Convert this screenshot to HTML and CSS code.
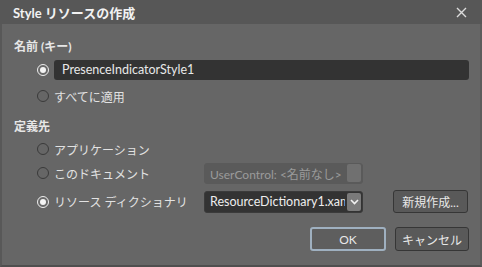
FILE: index.html
```html
<!DOCTYPE html>
<html lang="ja">
<head>
    <meta charset="UTF-8">
    <title>Style リソースの作成</title>
    <link rel="stylesheet" href="styles.css">
</head>
<body>
    <div class="dialog">
        <div class="titlebar">
            <span class="title">Style リソースの作成</span>
            <svg class="close" width="11" height="11" viewBox="0 0 11 11">
                <path d="M1 1 L10 10 M10 1 L1 10" stroke="#dcdcdc" stroke-width="1.4"/>
            </svg>
        </div>

        <div class="content">
            <div class="section-title">名前 (キー)</div>
            <div class="row row-name">
                <span class="radio checked"></span>
                <div class="textbox">PresenceIndicatorStyle1</div>
            </div>
            <div class="row row-all">
                <span class="radio"></span>
                <span class="label">すべてに適用</span>
            </div>

            <div class="section-title second">定義先</div>
            <div class="row row-app">
                <span class="radio"></span>
                <span class="label">アプリケーション</span>
            </div>
            <div class="row row-doc">
                <span class="radio"></span>
                <span class="label wide">このドキュメント</span>
                <div class="combo disabled">
                    <span class="combo-text">UserControl: &lt;名前なし&gt;</span>
                    <span class="combo-btn"></span>
                </div>
            </div>
            <div class="row row-dict">
                <span class="radio checked"></span>
                <span class="label wide">リソース ディクショナリ</span>
                <div class="combo">
                    <span class="combo-text">ResourceDictionary1.xaml</span>
                    <span class="combo-btn">
                        <svg width="9" height="6" viewBox="0 0 9 6">
                            <path d="M1 1 L4.5 4.5 L8 1" stroke="#f0f0f0" stroke-width="1.6" fill="none"/>
                        </svg>
                    </span>
                </div>
                <button class="btn new">新規作成...</button>
            </div>

            <div class="actions">
                <button class="btn ok">OK</button>
                <button class="btn">キャンセル</button>
            </div>
        </div>
    </div>
</body>
</html>
```

FILE: styles.css
```css
body {
    margin: 0;
    background-color: #4a4a4a;
    font-family: Lato, "Noto Sans CJK JP", sans-serif;
    font-size: 12px;
    color: #e6e6e6;
}
.dialog {
    width: 482px;
    height: 267px;
    box-sizing: border-box;
    background-color: #666666;
    border-left: 2px solid #585858;
    border-right: 2px solid #5c5c5c;
    border-bottom: 2px solid #4e4e4e;
    display: flex;
    flex-direction: column;
}
.titlebar {
    height: 24px;
    background-color: #575757;
    display: flex;
    align-items: center;
    justify-content: space-between;
    padding: 0 15px 0 13px;
    margin: 0 -2px;
}
.title {
    font-weight: bold;
    font-size: 13px;
    color: #f2f2f2;
}
.close {
    margin-top: 1px;
}
.content {
    flex: 1;
    padding: 0 11px 0 12px;
    display: flex;
    flex-direction: column;
}
.section-title {
    font-weight: bold;
    margin-top: 15px;
    height: 16px;
    line-height: 16px;
}
.section-title.second {
    margin-top: 13px;
}
.row {
    display: flex;
    align-items: center;
    padding-left: 23px;
}
.row-name {
    margin-top: 5px;
    height: 20px;
}
.row-all {
    margin-top: 6px;
    height: 20px;
}
.row-app {
    margin-top: 4px;
    height: 20px;
}
.row-doc {
    margin-top: 3px;
    height: 22px;
}
.row-dict {
    margin-top: 6px;
    height: 23px;
}
.radio {
    width: 12px;
    height: 12px;
    border: 1px solid #3a3a3a;
    border-radius: 50%;
    background-color: #666;
    box-sizing: border-box;
    flex-shrink: 0;
    margin-right: 5px;
    position: relative;
}
.radio.checked {
    border-color: #eeeeee;
    background-color: #6a6a6a;
}
.radio.checked::after {
    content: "";
    position: absolute;
    left: 2px;
    top: 2px;
    width: 6px;
    height: 6px;
    border-radius: 50%;
    background-color: #f5f5f5;
}
.label {
    color: #e2e2e2;
}
.label.wide {
    width: 150px;
}
.textbox {
    flex: 1;
    height: 20px;
    line-height: 20px;
    background-color: #333333;
    border-radius: 3px;
    padding-left: 8px;
    color: #e8e8e8;
    font-size: 12.5px;
}
.combo {
    width: 159px;
    height: 22px;
    box-sizing: border-box;
    border: 1px solid #3b3b3b;
    border-radius: 3px;
    background-color: #333333;
    display: flex;
    align-items: center;
    padding: 0 1px 0 5px;
}
.combo.disabled {
    background-color: #5a5a5a;
    border-color: #5a5a5a;
    width: 159px;
    height: 21px;
}
.combo-text {
    flex: 1;
    overflow: hidden;
    white-space: nowrap;
    color: #eeeeee;
    font-size: 12.5px;
}
.combo.disabled .combo-text {
    color: #9a9a9a;
    font-size: 12px;
}
.combo-btn {
    width: 14px;
    height: 18px;
    background-color: #7a7a7a;
    border-radius: 2px;
    display: flex;
    align-items: center;
    justify-content: center;
    margin-left: 2px;
}
.combo.disabled .combo-btn {
    background-color: #707070;
}
.btn {
    font-family: Lato, "Noto Sans CJK JP", sans-serif;
    font-size: 12px;
    color: #e8e8e8;
    background-color: #595959;
    border: 1px solid #363636;
    border-radius: 3px;
    height: 23px;
    padding: 0;
    cursor: pointer;
}
.btn.new {
    width: 75px;
    margin-left: 30px;
}
.actions {
    display: flex;
    justify-content: flex-end;
    gap: 9px;
    margin-top: 14px;
}
.actions .btn {
    width: 74px;
    height: 24px;
}
.btn.ok {
    width: 76px;
    border: 2px solid #9fb0c0;
    background-color: #5e5e5e;
}
```
